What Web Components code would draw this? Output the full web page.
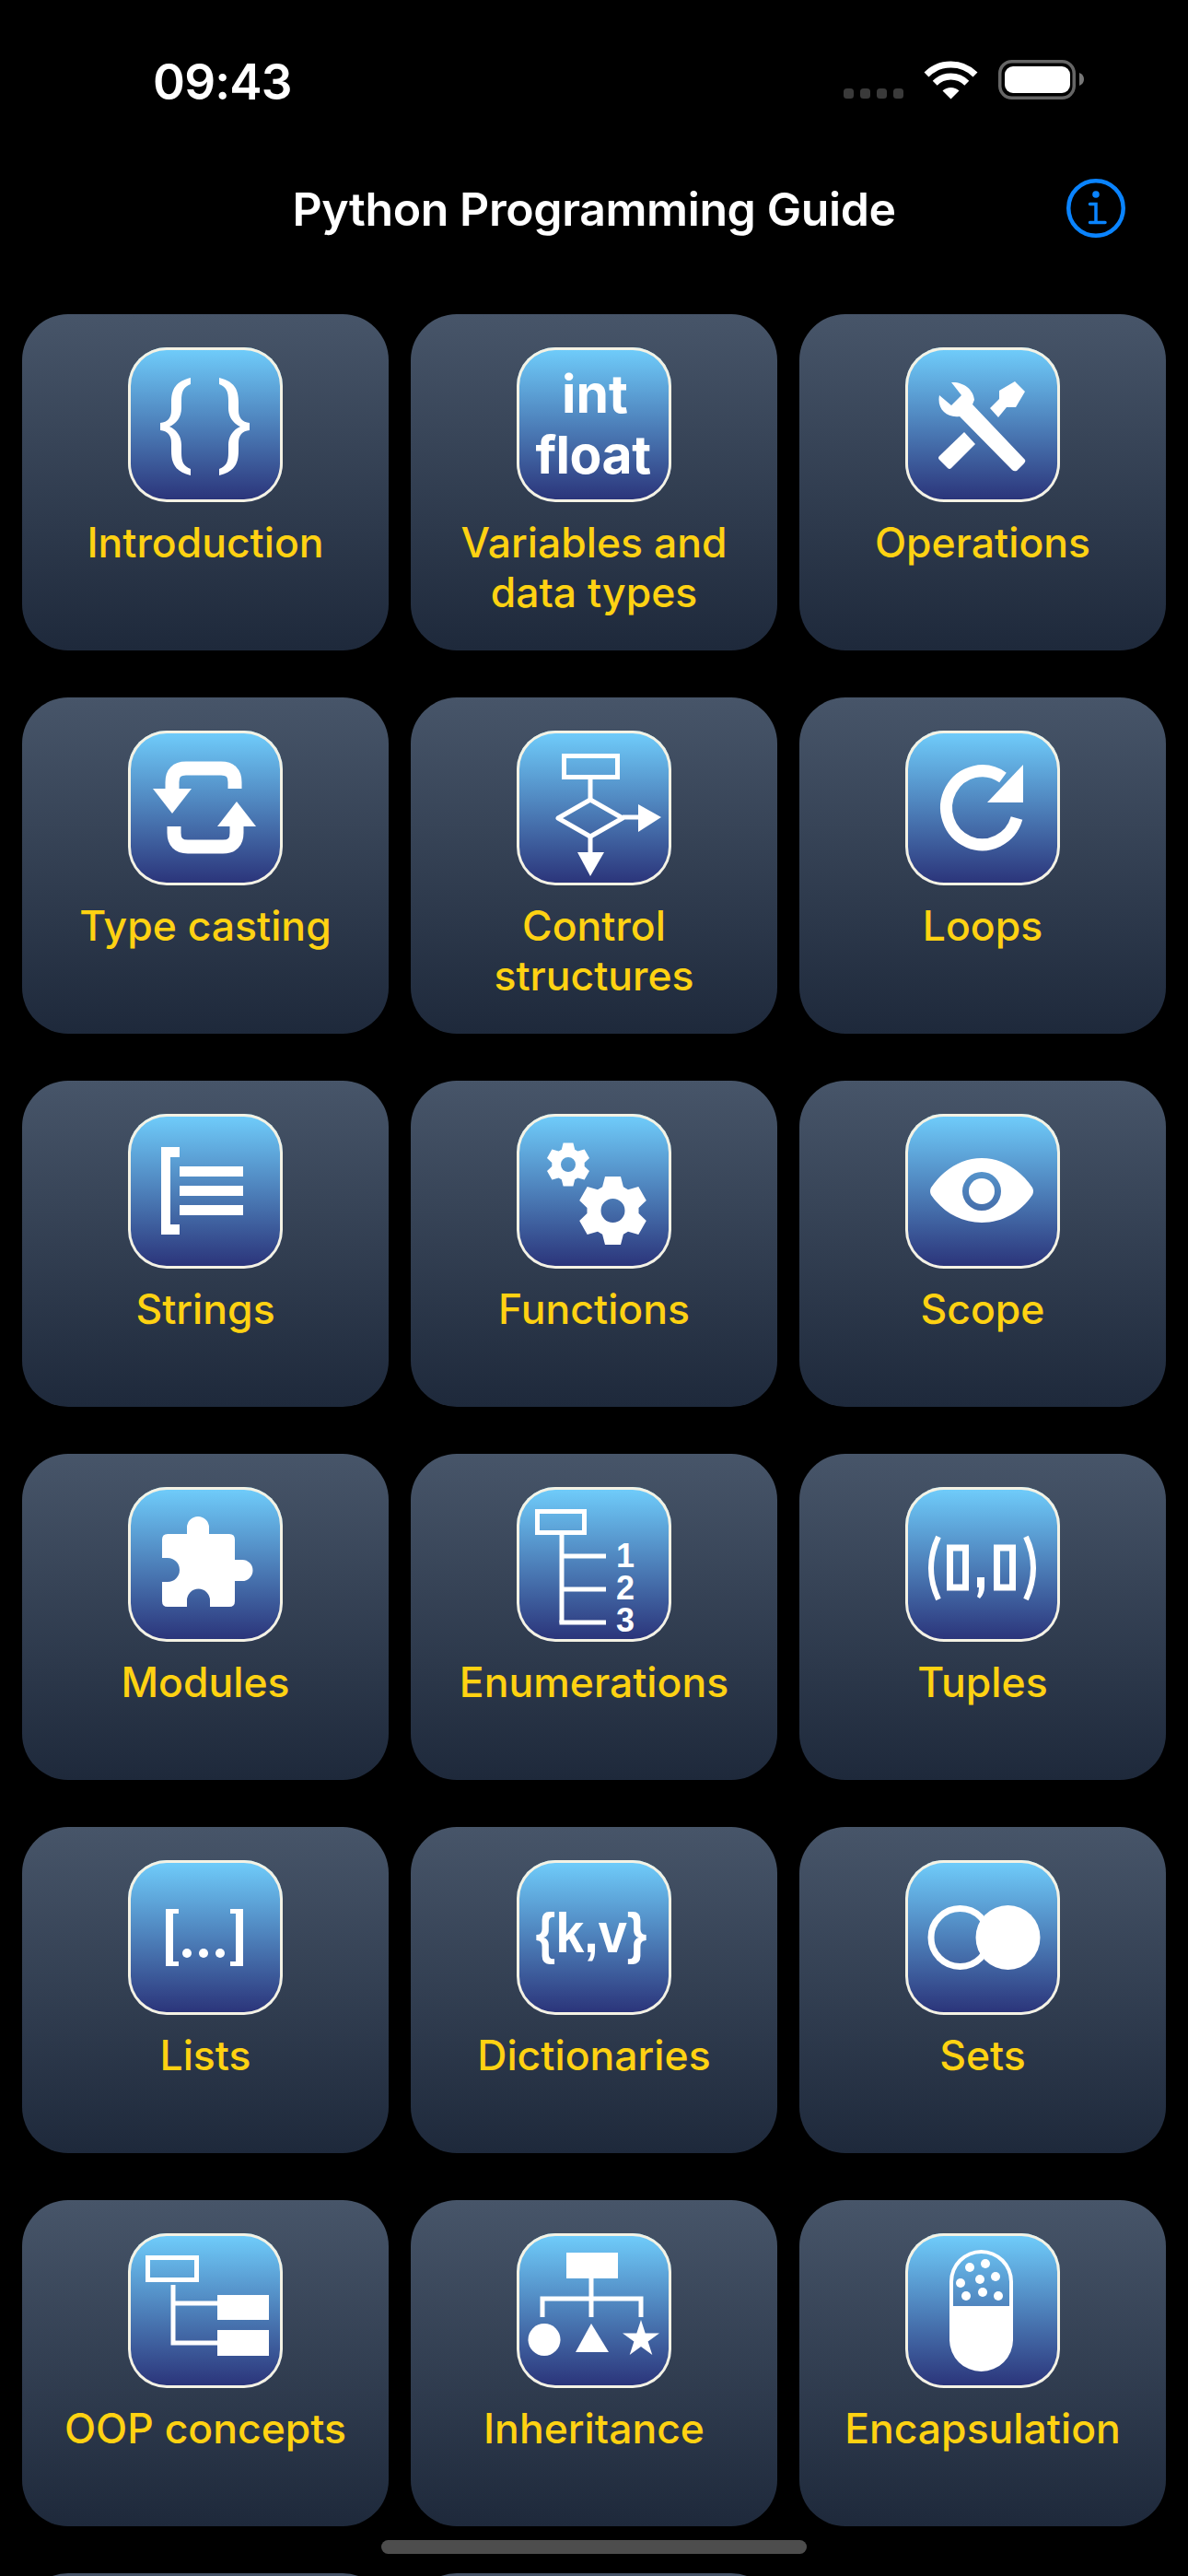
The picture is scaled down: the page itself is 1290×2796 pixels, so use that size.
<!DOCTYPE html>
<html lang="en">
<head>
<meta charset="utf-8">
<title>Python Programming Guide</title>
<style>
	html, body {
		margin: 0;
		background: #000;
		height: 2796px;
		overflow: hidden;
	}
	body {
		font-family: Inter, "Liberation Sans", sans-serif;
		position: relative;
	}
</style>
</head>
<body>
<status-bar time="09:43"></status-bar>
<nav-bar>Python Programming Guide</nav-bar>
<guide-grid>
	<guide-card icon="braces">Introduction</guide-card>
	<guide-card icon="types">Variables and data types</guide-card>
	<guide-card icon="tools">Operations</guide-card>
	<guide-card icon="cast">Type casting</guide-card>
	<guide-card icon="flow">Control structures</guide-card>
	<guide-card icon="loop">Loops</guide-card>
	<guide-card icon="strings">Strings</guide-card>
	<guide-card icon="gears">Functions</guide-card>
	<guide-card icon="eye">Scope</guide-card>
	<guide-card icon="puzzle">Modules</guide-card>
	<guide-card icon="enum">Enumerations</guide-card>
	<guide-card icon="tuple">Tuples</guide-card>
	<guide-card icon="list">Lists</guide-card>
	<guide-card icon="dict">Dictionaries</guide-card>
	<guide-card icon="sets">Sets</guide-card>
	<guide-card icon="oop">OOP concepts</guide-card>
	<guide-card icon="inherit">Inheritance</guide-card>
	<guide-card icon="capsule">Encapsulation</guide-card>
	<guide-card></guide-card>
	<guide-card></guide-card>
</guide-grid>
<home-indicator></home-indicator>

<script>
//	gear outline, teeth start at the top
function gear(cx, cy, R, hole) {
	const pts = [], rad = d => d * Math.PI / 180;
	for (let i = 0; i < 6; i++) {
		const a = -90 + i * 60;
		[[a - 24, R * .74], [a - 13, R], [a + 13, R], [a + 24, R * .74]].forEach(([d, r]) => {
			pts.push((cx + r * Math.cos(rad(d))).toFixed(1) + ' ' + (cy + r * Math.sin(rad(d))).toFixed(1));
		});
	}
	return `M${pts.join('L')}Z M${cx - hole} ${cy}a${hole} ${hole} 0 1 0 ${hole * 2} 0a${hole} ${hole} 0 1 0 ${-hole * 2} 0Z`;
}

const BRACE = 'M68 33L68 40C60 43 58 48 58 58L58 66C58 76 52 83 45 86C52 89 58 96 58 106L58 114C58 124 60 129 68 132L68 139C52 135 47 127 47 112L47 104C47 95 43 91 35 90L35 82C43 81 47 77 47 68L47 60C47 45 52 37 68 33Z';

const ICONS = {
	braces: `<path d="${BRACE}"/><path d="${BRACE}" transform="translate(167 0) scale(-1 1)"/>`,
	types: `<text x="85" y="71" text-anchor="middle" class="i" font-size="57">int</text>
		<text x="83" y="137" text-anchor="middle" class="i" font-size="57" letter-spacing="-.5">float</text>`,
	tools: `<path d="M50 38C62 37 74 45 75 57L73 62L130 122Q131 124 129 126L121 134Q118 135 116 133L59 75C45 77 34 67 37 52L50 63L61 52Z"/>
		<path d="M119 37L130 48L120 65L110 65L101 76L92 66L102 56L102 47Z"/>
		<path d="M64 92L76 105L50 131Q48 133 46 131L37 122Q35 120 37 118Z"/>`,
	cast: `<g class="s" stroke-width="15"><path d="M48 63L48 56Q48 41 63 41L101 41Q116 41 116 56L116 63"/><path d="M50 104L50 111Q50 126 65 126L103 126Q118 126 118 111L118 104"/></g>
		<path d="M27 63L69 63L48 90Z"/><path d="M118 77L139 104L97 104Z"/>`,
	flow: `<g transform="translate(2 1)"><g class="s" stroke-width="5"><rect x="49.500" y="26.500" width="58" height="23"/><path d="M78 52L78 74"/><path d="M78 74L113 94L78 114L43 94Z" stroke-linejoin="round"/><path d="M113 93L132 93"/><path d="M78 114L78 132"/></g>
		<path d="M130 79L155 93L130 109Z"/><path d="M64 131L93 131L78 157Z"/></g>`,
	loop: `<path class="s" stroke-width="13" d="M121 95A39 40 0 1 1 106 51"/><path d="M128 37L128 78L89 78Z"/>`,
	strings: `<path d="M36 36H56V47H46V120H56V131H36Z"/><rect x="56" y="57" width="69" height="11"/><rect x="56" y="78" width="69" height="11"/><rect x="56" y="99" width="69" height="11"/>`,
	gears: `<path fill-rule="evenodd" d="${gear(56, 55, 24, 8)}"/><path fill-rule="evenodd" d="${gear(104.5, 105, 38, 13)}"/>`,
	eye: `<path fill-rule="evenodd" d="M28 80C40 62 60 48 83 48C106 48 126 62 138 80Q140 84 138 88C126 106 106 118 83 118C60 118 40 106 28 88Q26 84 28 80ZM62 84a21 21 0 1 0 42 0a21 21 0 1 0 -42 0Z"/><circle cx="83" cy="84" r="14"/>`,
	puzzle: `<path d="M43 51L64 51L64 44A12 12 0 0 1 88 44L88 51L110 51Q116 51 116 57L116 79L124 79A11.500 11.500 0 0 1 124 102L116 102L116 124Q116 130 110 130L89 130L89 123A12.500 12.500 0 0 0 64 123L64 130L43 130Q37 130 37 124L37 103L43 103A13 13 0 0 0 43 77L37 77L37 57Q37 51 43 51Z"/>`,
	enum: `<g class="s" stroke-width="5"><rect x="22.500" y="26.500" width="51" height="23"/><path d="M49 52L49 147.500"/><path d="M49 75L97 75M49 111L97 111M46.500 147L97 147"/></g>
		<foreignObject x="100" y="57" width="36" height="110"><div xmlns="http://www.w3.org/1999/xhtml" class="nums">1
2
3</div></foreignObject>`,
	tuple: `<g class="s" stroke-width="6"><path d="M36 54Q20 88 36 122"/><path d="M131 54Q147 88 131 122"/><rect x="48.500" y="66" width="17" height="43" stroke-width="7"/><rect x="99.500" y="66" width="17" height="43" stroke-width="7"/></g>
		<path d="M78 98H86V108Q86 116 81 121L78 119Q80 114 80 109H78Z"/>`,
	list: `<path d="M41 53H55V58H49V110H55V115H41Z"/><path d="M125 53H111V58H117V110H111V115H125Z"/><circle cx="64" cy="101" r="5"/><circle cx="82" cy="101" r="5"/><circle cx="100" cy="101" r="5"/>`,
	dict: `<text x="81" y="100" text-anchor="middle" class="t" font-size="62" textLength="121" lengthAdjust="spacingAndGlyphs">{k,v}</text>`,
	sets: `<g transform="translate(1.500 0)"><circle class="s" cx="58" cy="84" r="31.500" stroke-width="7"/><circle cx="110" cy="84" r="35"/></g>`,
	oop: `<g class="s" stroke-width="5"><rect x="21.500" y="26.500" width="53" height="24"/><path d="M49 56L49 121M49 76L97 76M46.500 119L97 119"/></g>
		<rect x="97" y="67" width="56" height="27"/><rect x="97" y="105" width="56" height="28"/>`,
	inherit: `<rect x="54" y="21" width="56" height="28"/><g class="s" stroke-width="5"><path d="M81 49L81 91M28 91L28 71L135 71L135 91"/></g>
		<ellipse cx="30" cy="115.500" rx="17.500" ry="17.500"/><path d="M81 98L100 129L64 129Z"/>
		<polygon points="135,94 139.700,108.500 155,108.500 142.600,117.500 147.300,132 135,123 122.700,132 127.400,117.500 115,108.500 130.300,108.500"/>`,
	capsule: `<path d="M48 81V52.500A34.500 34.500 0 0 1 117 52.500V81H113V52.500A30.500 30.500 0 0 0 52 52.500V81Z"/><path d="M48 79H117V115.500A34.500 34.500 0 0 1 48 115.500Z"/>
		<circle cx="70" cy="37" r="5"/><circle cx="87" cy="33" r="5"/><circle cx="98" cy="47" r="5"/><circle cx="81" cy="50" r="5"/><circle cx="60" cy="54" r="5"/><circle cx="66" cy="68" r="5"/><circle cx="84" cy="64" r="5"/><circle cx="101" cy="68" r="5"/>`
};

customElements.define('status-bar', class extends HTMLElement {
	connectedCallback() {
		this.attachShadow({ mode: 'open' }).innerHTML = `
			<style>
				:host {
					display: flex;
					justify-content: space-between;
					align-items: flex-start;
					box-sizing: border-box;
					height: 150px;
					padding: 59px 113px 0 166px;
					color: #fff;
				}
				.time {
					font: 600 53px/60px Inter, "Liberation Sans", sans-serif;
					letter-spacing: -.8px;
				}
				svg {
					display: block;
					margin-top: 6px;
				}
			</style>
			<div class="time">${this.getAttribute('time')}</div>
			<svg width="261" height="43" viewBox="916 65 261 43" fill="#fff">
				<g fill="#3a3a3a">
					<rect x="916" y="96" width="11" height="11" rx="3.500"/>
					<rect x="934" y="96" width="11" height="11" rx="3.500"/>
					<rect x="952" y="96" width="11" height="11" rx="3.500"/>
					<rect x="970" y="96" width="11" height="11" rx="3.500"/>
				</g>
				<g transform="translate(1032.500 107.500)">
					<path d="M0 0L-9 -9A13 13 0 0 1 9 -9Z"/>
					<path d="M-17.300 -17.300A24.500 24.500 0 0 1 17.300 -17.300" fill="none" stroke="#fff" stroke-width="7"/>
					<path d="M-26.500 -26.500A37.500 37.500 0 0 1 26.500 -26.500" fill="none" stroke="#fff" stroke-width="7"/>
				</g>
				<rect x="1085.750" y="66.750" width="80.500" height="39.500" rx="13" fill="none" stroke="#666" stroke-width="3.500"/>
				<rect x="1091" y="72" width="71" height="29" rx="9"/>
				<path d="M1172 79Q1177 81 1177 86Q1177 91 1172 93Z" fill="#777"/>
			</svg>`;
	}
});

customElements.define('nav-bar', class extends HTMLElement {
	connectedCallback() {
		this.attachShadow({ mode: 'open' }).innerHTML = `
			<style>
				:host {
					display: grid;
					grid-template-columns: 1fr auto 1fr;
					align-items: center;
					box-sizing: border-box;
					height: 152px;
					padding-top: 2px;
					color: #fff;
					font: 600 50px/60px Inter, "Liberation Sans", sans-serif;
					letter-spacing: -.4px;
				}
				svg {
					display: block;
					justify-self: end;
					margin: 0 67px 2px 0;
				}
			</style>
			<span></span>
			<slot></slot>
			<svg width="66" height="66" viewBox="0 0 66 66" fill="none" stroke="#0a84ff" stroke-width="4.500" stroke-linecap="round">
				<circle cx="33" cy="33" r="29.750"/>
				<circle cx="33" cy="18" r="3.800" fill="#0a84ff" stroke="none"/>
				<path stroke-width="3.500" d="M26.500 28.500H33V48.500M26.500 48.500H43"/>
			</svg>`;
	}
});

customElements.define('guide-grid', class extends HTMLElement {
	constructor() {
		super();
		this.attachShadow({ mode: 'open' }).innerHTML = `
			<style>
				:host {
					display: grid;
					grid-template-columns: repeat(3, 398px);
					grid-template-rows: 365px 365px repeat(5, 354px);
					column-gap: 24px;
					row-gap: 51px;
					box-sizing: border-box;
					height: 2494px;
					padding: 39px 24px 0;
					overflow: hidden;
				}
			</style>
			<slot></slot>`;
	}
});

customElements.define('guide-card', class extends HTMLElement {
	connectedCallback() {
		const icon = this.getAttribute('icon');
		this.attachShadow({ mode: 'open' }).innerHTML = `
			<style>
				:host {
					display: flex;
					flex-direction: column;
					align-items: center;
					box-sizing: border-box;
					padding: 36px 16px 0;
					border-radius: 50px;
					background: linear-gradient(#475569, #1e293b);
				}
				.label {
					margin-top: 17px;
					color: #ffd212;
					font: 450 44.500px/54px Inter, "Liberation Sans", sans-serif;
					text-align: center;
				}
			</style>
			${icon ? `<guide-icon name="${icon}"></guide-icon>
			<div class="label"><slot></slot></div>` : ''}`;
	}
});

customElements.define('guide-icon', class extends HTMLElement {
	connectedCallback() {
		this.attachShadow({ mode: 'open' }).innerHTML = `
			<style>
				:host {
					display: block;
					flex: none;
					width: 168px;
					height: 168px;
					border-radius: 42px;
					background: linear-gradient(#70cefc, #2a3278);
					box-shadow: inset 0 0 0 3px #f4f2e4;
				}
				svg {
					display: block;
					fill: #fff;
				}
				.s, .s * {
					fill: none;
					stroke: #fff;
				}
				.t {
					font-family: "Liberation Sans", sans-serif;
					font-weight: 700;
				}
				.i {
					font-family: Inter, "Liberation Sans", sans-serif;
					font-weight: 700;
				}
				.nums {
					color: #fff;
					font: 700 36px/35px "Liberation Sans", sans-serif;
					text-align: center;
					white-space: pre-line;
				}
			</style>
			<svg width="168" height="168" viewBox="0 0 168 168">${ICONS[this.getAttribute('name')]}</svg>`;
	}
});

customElements.define('home-indicator', class extends HTMLElement {
	constructor() {
		super();
		this.attachShadow({ mode: 'open' }).innerHTML = `
			<style>
				:host {
					position: absolute;
					left: 414px;
					top: 2757px;
					width: 462px;
					height: 15px;
					border-radius: 8px;
					background: #4d4d4d;
				}
			</style>`;
	}
});
</script>
</body>
</html>
